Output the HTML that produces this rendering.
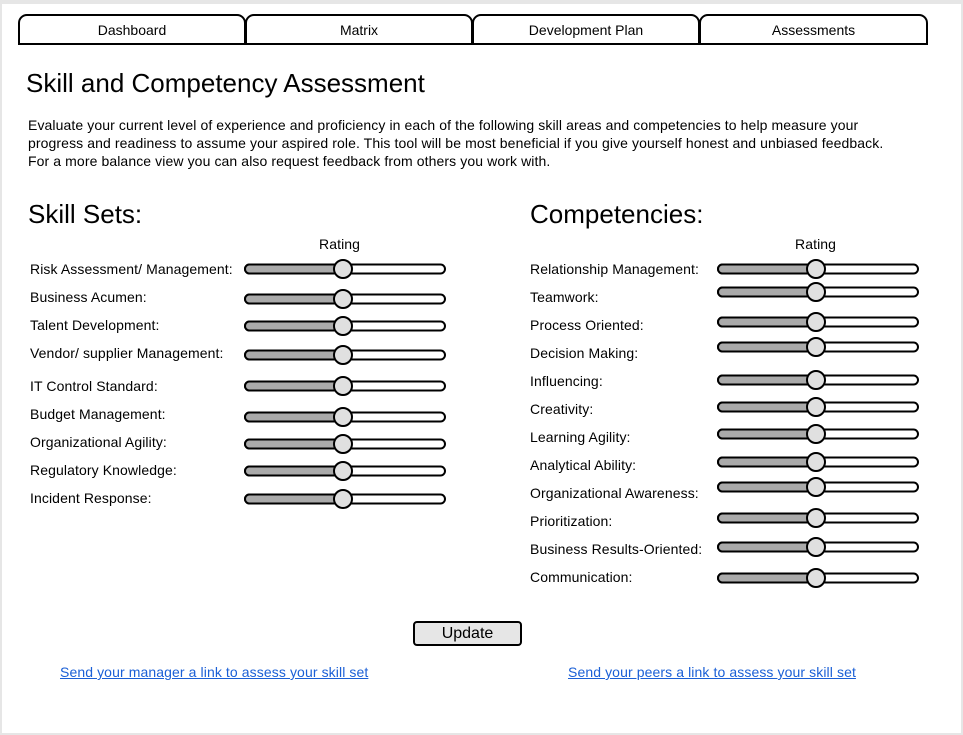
<!DOCTYPE html>
<html><head><meta charset="utf-8"><style>
html,body{margin:0;padding:0;width:963px;height:735px;overflow:hidden;background:#e6e6e6;}
#pg{position:absolute;left:2px;top:4px;width:959px;height:729px;background:#fff;}
*{font-family:"Liberation Sans",Arial,sans-serif;}
.t{position:absolute;font-size:14px;color:#000;white-space:nowrap;line-height:16px;letter-spacing:0.1px;}
.tab{position:absolute;top:14px;height:27px;border:2px solid #000;border-bottom:2px solid #000;border-radius:9px 9px 0 0;box-sizing:content-box;text-align:center;font-size:14px;line-height:28px;background:#fff;}
a{color:#1a5fd6;text-decoration:underline;}
</style></head><body>
<div id="pg"></div>
<div class="tab" style="left:18px;width:224px">Dashboard</div>
<div class="tab" style="left:245px;width:224px">Matrix</div>
<div class="tab" style="left:472px;width:224px">Development Plan</div>
<div class="tab" style="left:699px;width:225px">Assessments</div>
<div class="t" style="left:26px;top:69px;font-size:26px;line-height:28px;letter-spacing:0">Skill and Competency Assessment</div>
<div class="t" style="left:28px;top:116px;line-height:18px">Evaluate your current level of experience and proficiency in each of the following skill areas and competencies to help measure your<br>progress and readiness to assume your aspired role. This tool will be most beneficial if you give yourself honest and unbiased feedback.<br>For a more balance view you can also request feedback from others you work with.</div>
<div class="t" style="left:28px;top:200px;font-size:26px;line-height:28px;letter-spacing:0">Skill Sets:</div>
<div class="t" style="left:530px;top:200px;font-size:26px;line-height:28px;letter-spacing:0">Competencies:</div>
<div class="t" style="left:319px;top:236px">Rating</div>
<div class="t" style="left:795px;top:236px">Rating</div>
<div class="t" style="left:30px;top:261px">Risk Assessment/ Management:</div>
<div class="t" style="left:30px;top:289px">Business Acumen:</div>
<div class="t" style="left:30px;top:317px">Talent Development:</div>
<div class="t" style="left:30px;top:345px">Vendor/ supplier Management:</div>
<div class="t" style="left:30px;top:378px">IT Control Standard:</div>
<div class="t" style="left:30px;top:406px">Budget Management:</div>
<div class="t" style="left:30px;top:434px">Organizational Agility:</div>
<div class="t" style="left:30px;top:462px">Regulatory Knowledge:</div>
<div class="t" style="left:30px;top:490px">Incident Response:</div>
<div class="t" style="left:530px;top:261px">Relationship Management:</div>
<div class="t" style="left:530px;top:289px">Teamwork:</div>
<div class="t" style="left:530px;top:317px">Process Oriented:</div>
<div class="t" style="left:530px;top:345px">Decision Making:</div>
<div class="t" style="left:530px;top:373px">Influencing:</div>
<div class="t" style="left:530px;top:401px">Creativity:</div>
<div class="t" style="left:530px;top:429px">Learning Agility:</div>
<div class="t" style="left:530px;top:457px">Analytical Ability:</div>
<div class="t" style="left:530px;top:485px">Organizational Awareness:</div>
<div class="t" style="left:530px;top:513px">Prioritization:</div>
<div class="t" style="left:530px;top:541px">Business Results-Oriented:</div>
<div class="t" style="left:530px;top:569px">Communication:</div>
<svg width="963" height="735" style="position:absolute;left:0;top:0">
<defs><g id="s">
<rect x="0" y="-4.5" width="200" height="9" rx="4.5" fill="#fff" stroke="#000" stroke-width="2"/>
<path d="M4.5 -4.5 H98 V4.5 H4.5 A4.5 4.5 0 0 1 4.5 -4.5Z" fill="#aaa" stroke="#000" stroke-width="2"/>
<circle cx="98" cy="0" r="9" fill="#e0e0e0" stroke="#000" stroke-width="2"/>
</g></defs>
<use href="#s" x="245" y="269"/><use href="#s" x="245" y="299"/><use href="#s" x="245" y="326"/>
<use href="#s" x="245" y="355"/><use href="#s" x="245" y="386"/><use href="#s" x="245" y="417"/>
<use href="#s" x="245" y="444"/><use href="#s" x="245" y="471"/><use href="#s" x="245" y="499"/>
<use href="#s" x="718" y="269"/><use href="#s" x="718" y="292"/><use href="#s" x="718" y="322"/>
<use href="#s" x="718" y="347"/><use href="#s" x="718" y="380"/><use href="#s" x="718" y="407"/>
<use href="#s" x="718" y="434"/><use href="#s" x="718" y="462"/><use href="#s" x="718" y="487"/>
<use href="#s" x="718" y="518"/><use href="#s" x="718" y="547"/><use href="#s" x="718" y="578"/>
</svg>
<div style="position:absolute;left:413px;top:621px;width:105px;height:21px;border:2px solid #000;border-radius:4px;background:#e6e6e6;text-align:center;font-size:16px;line-height:21px">Update</div>
<div class="t" style="left:60px;top:664px"><a>Send your manager a link to assess your skill set</a></div>
<div class="t" style="left:568px;top:664px"><a>Send your peers a link to assess your skill set</a></div>
</body></html>
